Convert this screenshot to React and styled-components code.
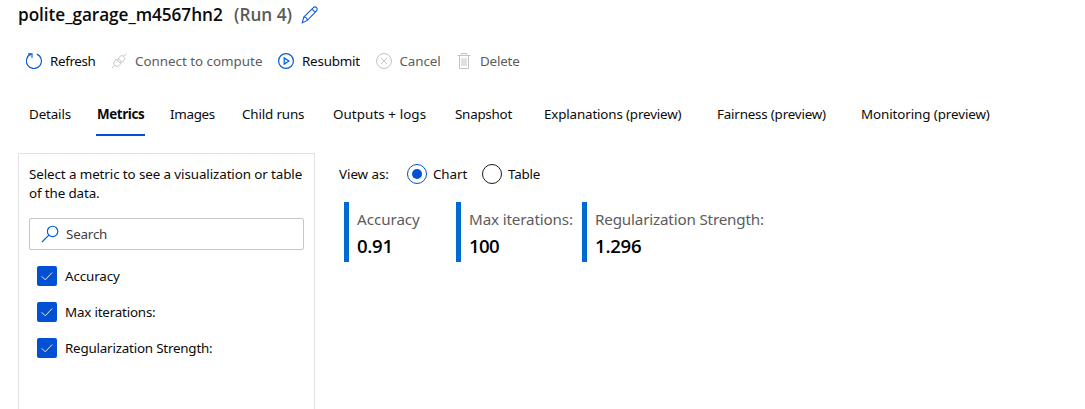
import React from "react";
import styled, { createGlobalStyle } from "styled-components";

const Global = createGlobalStyle`
  * { box-sizing: border-box; }
  body { margin: 0; background: #fff; }
`;

const Page = styled.main`
  height: 409px;
  padding-left: 18px;
  overflow: hidden;
  color: #0b0b0b;
  font: 400 13.4px/20px "Noto Sans", "Open Sans", sans-serif;
  white-space: nowrap;
`;
const Label = styled.span`
  flex: none;
  width: ${(p) => p.$w}px;
  letter-spacing: ${(p) => p.$ls || 0}px;
`;
const Header = styled.header`
  display: flex;
  align-items: center;
  height: 30px;
  font: 600 17.2px/30px "Open Sans", "Noto Sans", sans-serif;
`;
const Run = styled(Label)`
  margin-left: 12px;
  color: #5a5a5a;
`;
const Pencil = styled.svg`
  margin-left: 9px;
`;
const Toolbar = styled.div`
  display: flex;
  align-items: center;
  height: 62px;
  padding-left: 8px;
`;
const Command = styled.div`
  display: flex;
  align-items: center;
  gap: 8px;
  margin-right: ${(p) => p.$after}px;
  color: ${(p) => (p.$disabled ? "#5c5c5c" : "#0b0b0b")};
  svg { color: ${(p) => (p.$disabled ? "#c4c4c4" : "#015cda")}; }
`;
const Tabs = styled.nav`
  display: flex;
  height: 44px;
  padding-left: 11px;
`;
const Tab = styled.div`
  height: 44px;
  margin-right: ${(p) => p.$after}px;
  line-height: 44px;
  font-family: ${(p) => (p.$active ? '"Open Sans"' : '"Noto Sans"')}, sans-serif;
  font-weight: ${(p) => (p.$active ? 700 : 400)};
  box-shadow: ${(p) => (p.$active ? "inset 0 -2px #0250d4" : "none")};
  ${(p) => p.$active && "margin-left: -1px; padding: 0 1px;"}
`;
const Body = styled.div`
  display: flex;
  align-items: flex-start;
  margin-top: 17px;
`;
const Sidebar = styled.aside`
  width: 297px;
  height: 280px;
  padding: 11px 10px;
  border: 1px solid #e2e2e2;
`;
const Hint = styled.div`
  display: flex;
  flex-direction: column;
  line-height: 19px;
`;
const Search = styled.div`
  display: flex;
  align-items: center;
  gap: 7px;
  width: 275px;
  height: 32px;
  margin: 15px 0 16px;
  padding-left: 11px;
  border: 1px solid #c6c6c6;
  border-radius: 2px;
  color: #3c3c3c;
`;
const CheckRow = styled.div`
  display: flex;
  align-items: center;
  gap: 8px;
  height: 20px;
  margin: 0 0 16px 8px;
`;
const Box = styled.span`
  display: flex;
  width: 20px;
  height: 20px;
  border-radius: 2px;
  background: #0250d4;
`;
const Content = styled.section`
  padding: 11px 0 0 24px;
`;
const ViewAs = styled.div`
  display: flex;
  align-items: center;
  height: 20px;
`;
const Radio = styled.span`
  display: flex;
  align-items: center;
  justify-content: center;
  width: 20px;
  height: 20px;
  margin: 0 6px 0 ${(p) => p.$before}px;
  border: 1px solid ${(p) => (p.$on ? "#0250d4" : "#1a1a1a")};
  border-radius: 50%;
  &::after {
    content: "";
    width: 10px;
    height: 10px;
    border-radius: 50%;
    background: ${(p) => (p.$on ? "#0250d4" : "transparent")};
  }
`;
const Cards = styled.div`
  display: flex;
  margin: 18px 0 0 5px;
`;
const Card = styled.div`
  display: flex;
  flex-direction: column;
  width: ${(p) => p.$w}px;
  height: 60px;
  padding: 5px 0 0 8px;
  border-left: 5px solid #006bcf;
`;
const Name = styled(Label)`
  color: #5c5c5c;
  font-size: 15.2px;
  line-height: 25px;
`;
const Value = styled(Label)`
  font: 600 18.6px/28px "Open Sans", "Noto Sans", sans-serif;
  color: #000;
`;

const Icon = ({ children, size = 16 }) => (
  <svg width={size} height={size} viewBox="0 0 16 16" fill="none" stroke="currentColor" strokeWidth="1">
    {children}
  </svg>
);
const icons = {
  refresh: <><path d="M10.8 1.1A7.5 7.5 0 1 1 5 1.1" strokeWidth="1.15" /><path d="M2 .8h4v4" strokeWidth="1.15" /></>,
  connect: <path d="M.8 15.2l2.7-2.7M12.5 3.5L15.2.8M5.2 6.2l4.6 4.6-1.4 1.4c-1.3 1.3-3.3 1.5-4.6.2s-1.1-3.3.1-4.8zM7.2 5.2l1.4-1.4c1.3-1.3 3.1-1.5 4.3-.3s1 3-.3 4.3l-1.8 1.8zM6.2 7.2l1.5-1.5M9 9.8l1.5-1.5" />,
  resubmit: <><circle cx="8" cy="8" r="7.4" strokeWidth="1.2" /><path d="M6.2 4.9v6.2L10.9 8z" strokeWidth="1.2" /></>,
  cancel: <><circle cx="8" cy="8" r="7.5" /><path d="M5 5l6 6M11 5l-6 6" /></>,
  trash: <path d="M1.5 2.5h13M5.5 2.5v-2h5v2M3.5 2.5v13h9v-13M6 5v8M8 5v8M10 5v8" />,
};

const commands = [
  ["refresh", "Refresh", 46, 15, false, -0.35],
  ["connect", "Connect to compute", 127, 16, true, -0.02],
  ["resubmit", "Resubmit", 58, 15.5, false, -0.22],
  ["cancel", "Cancel", 42, 14.5, true, -0.1],
  ["trash", "Delete", 40, 0, true, -0.2],
];
const tabs = [
  ["Details", 41, 27, -0.15],
  ["Metrics", 47, 25, -0.4],
  ["Images", 44, 28, -0.3],
  ["Child runs", 62, 29, -0.15],
  ["Outputs + logs", 93, 29, 0.07],
  ["Snapshot", 57, 32, -0.25],
  ["Explanations (preview)", 138, 35, -0.16],
  ["Fairness (preview)", 109, 35, -0.2],
  ["Monitoring (preview)", 129, 0, -0.1],
];
const metrics = [
  ["Accuracy", -0.12],
  ["Max iterations:", -0.2],
  ["Regularization Strength:", -0.21],
];

export default function App() {
  return (
    <Page>
      <Global />
      <Header>
        <Label $w={204} $ls={-0.05}>polite_garage_m4567hn2</Label>
        <Run $w={58}>(Run 4)</Run>
        <Pencil width="18" height="18" viewBox="0 0 18 18" fill="none" stroke="#1460d8" strokeWidth="1.1">
          <path d="M1.3 16.7l1.5-5.7L12.4 1.7c.9-.9 2.2-.9 3.1 0s.9 2.2 0 3.1L6.4 14.4zM11 3.1l3.1 3.1M2.8 11c1.9.1 3.3 1.5 3.6 3.4" />
        </Pencil>
      </Header>
      <Toolbar>
        {commands.map(([icon, text, w, after, disabled, ls]) => (
          <Command key={text} $after={after} $disabled={disabled}>
            <Icon>{icons[icon]}</Icon>
            <Label $w={w} $ls={ls}>{text}</Label>
          </Command>
        ))}
      </Toolbar>
      <Tabs>
        {tabs.map(([text, w, after, ls], i) => (
          <Tab key={text} $after={after} $active={i === 1}>
            <Label as="div" $w={w} $ls={ls}>{text}</Label>
          </Tab>
        ))}
      </Tabs>
      <Body>
        <Sidebar>
          <Hint>
            <Label $w={273} $ls={-0.1}>Select a metric to see a visualization or table</Label>
            <Label $w={70} $ls={-0.12}>of the data.</Label>
          </Hint>
          <Search>
            <svg width="18" height="18" viewBox="0 0 18 18" fill="none" stroke="#015cda" strokeWidth="1.15">
              <circle cx="11.6" cy="6.4" r="5.2" />
              <path d="M7.9 10.1L1 17" />
            </svg>
            <Label $w={41} $ls={-0.2}>Search</Label>
          </Search>
          {metrics.map(([t, ls]) => (
            <CheckRow key={t}>
              <Box>
                <svg width="20" height="20" viewBox="0 0 20 20" fill="none" stroke="#fff" strokeWidth="0.9">
                  <path d="M4.7 10.3l3.5 3.5 7-7.3" />
                </svg>
              </Box>
              <Label $ls={ls}>{t}</Label>
            </CheckRow>
          ))}
        </Sidebar>
        <Content>
          <ViewAs>
            <Label $w={50} $ls={-0.05}>View as:</Label>
            <Radio $on $before={18} />
            <Label $w={34} $ls={-0.1}>Chart</Label>
            <Radio $before={15} />
            <Label $w={32} $ls={-0.2}>Table</Label>
          </ViewAs>
          <Cards>
            <Card $w={112}><Name $w={63} $ls={-0.05}>Accuracy</Name><Value $ls={-0.3}>0.91</Value></Card>
            <Card $w={126}><Name $w={104} $ls={-0.15}>Max iterations:</Name><Value $ls={-0.6}>100</Value></Card>
            <Card $w={190}><Name $w={169} $ls={-0.17}>Regularization Strength:</Name><Value $ls={-0.25}>1.296</Value></Card>
          </Cards>
        </Content>
      </Body>
    </Page>
  );
}
